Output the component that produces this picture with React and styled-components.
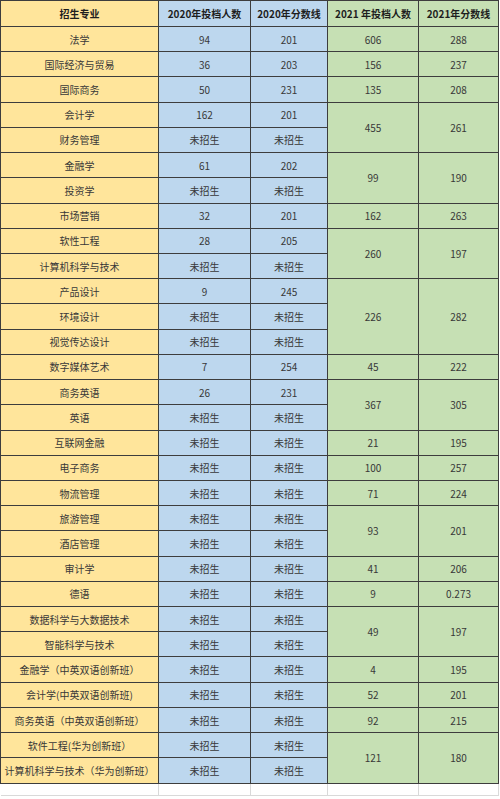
import React from "react";
import styled, { createGlobalStyle } from "styled-components";

const Global = createGlobalStyle`
  html, body { margin: 0; padding: 0; background: #ffffff; }
  body { font-family: "Noto Sans CJK SC", "Noto Sans", sans-serif; }
`;

const COLS = "158px 92px 77px 91px 80px";

const Sheet = styled.div`
  width: 500px;
  height: 799px;
  overflow: hidden;
  background: #fff;
`;

const Table = styled.div`
  display: grid;
  grid-template-columns: ${COLS};
  grid-template-rows: 26px repeat(30, 25.23px);
  width: max-content;
  border-top: 1px solid #3d3d3d;
  border-left: 1px solid #3d3d3d;
`;

const BG = {
  y: "#ffe59b",
  b: "#bdd7ee",
  g: "#c6e0b4",
};

const Cell = styled.div`
  grid-row: span ${(p) => p.$span || 1};
  background: ${(p) => BG[p.$tone]};
  border-right: 1px solid #3d3d3d;
  border-bottom: 1px solid #3d3d3d;
  display: flex;
  align-items: center;
  justify-content: center;
  font-size: 10px;
  font-weight: ${(p) => (p.$head ? 700 : 400)};
  color: ${(p) => (p.$head ? "#1e1e1e" : "#383838")};
  white-space: nowrap;
  letter-spacing: 0;
  min-width: 0;
`;

const EmptyRow = styled.div`
  display: grid;
  grid-template-columns: ${COLS};
  padding-left: 1px;
  height: 12px;
`;

const EmptyCell = styled.div`
  border-right: 1px solid #d9d9d9;
  border-bottom: 1px solid #d9d9d9;
`;

// [major, 2020 count, 2020 line, 2021 count, 2021 line, span]
const rows = [
  ["法学", "94", "201", "606", "288", 1],
  ["国际经济与贸易", "36", "203", "156", "237", 1],
  ["国际商务", "50", "231", "135", "208", 1],
  ["会计学", "162", "201", "455", "261", 2],
  ["财务管理", "未招生", "未招生"],
  ["金融学", "61", "202", "99", "190", 2],
  ["投资学", "未招生", "未招生"],
  ["市场营销", "32", "201", "162", "263", 1],
  ["软性工程", "28", "205", "260", "197", 2],
  ["计算机科学与技术", "未招生", "未招生"],
  ["产品设计", "9", "245", "226", "282", 3],
  ["环境设计", "未招生", "未招生"],
  ["视觉传达设计", "未招生", "未招生"],
  ["数字媒体艺术", "7", "254", "45", "222", 1],
  ["商务英语", "26", "231", "367", "305", 2],
  ["英语", "未招生", "未招生"],
  ["互联网金融", "未招生", "未招生", "21", "195", 1],
  ["电子商务", "未招生", "未招生", "100", "257", 1],
  ["物流管理", "未招生", "未招生", "71", "224", 1],
  ["旅游管理", "未招生", "未招生", "93", "201", 2],
  ["酒店管理", "未招生", "未招生"],
  ["审计学", "未招生", "未招生", "41", "206", 1],
  ["德语", "未招生", "未招生", "9", "0.273", 1],
  ["数据科学与大数据技术", "未招生", "未招生", "49", "197", 2],
  ["智能科学与技术", "未招生", "未招生"],
  ["金融学（中英双语创新班）", "未招生", "未招生", "4", "195", 1],
  ["会计学(中英双语创新班)", "未招生", "未招生", "52", "201", 1],
  ["商务英语（中英双语创新班）", "未招生", "未招生", "92", "215", 1],
  ["软件工程(华为创新班）", "未招生", "未招生", "121", "180", 2],
  ["计算机科学与技术（华为创新班）", "未招生", "未招生"],
];

export default function App() {
  return (
    <Sheet>
      <Global />
      <Table>
        <Cell $tone="y" $head>招生专业</Cell>
        <Cell $tone="b" $head>2020年投档人数</Cell>
        <Cell $tone="b" $head>2020年分数线</Cell>
        <Cell $tone="g" $head>2021 年投档人数</Cell>
        <Cell $tone="g" $head>2021年分数线</Cell>
        {rows.map((r, i) => (
          <React.Fragment key={i}>
            <Cell $tone="y">{r[0]}</Cell>
            <Cell $tone="b">{r[1]}</Cell>
            <Cell $tone="b">{r[2]}</Cell>
            {r.length > 3 && (
              <>
                <Cell $tone="g" $span={r[5]}>{r[3]}</Cell>
                <Cell $tone="g" $span={r[5]}>{r[4]}</Cell>
              </>
            )}
          </React.Fragment>
        ))}
      </Table>
      <EmptyRow>
        <EmptyCell />
        <EmptyCell />
        <EmptyCell />
        <EmptyCell />
        <EmptyCell />
      </EmptyRow>
    </Sheet>
  );
}
